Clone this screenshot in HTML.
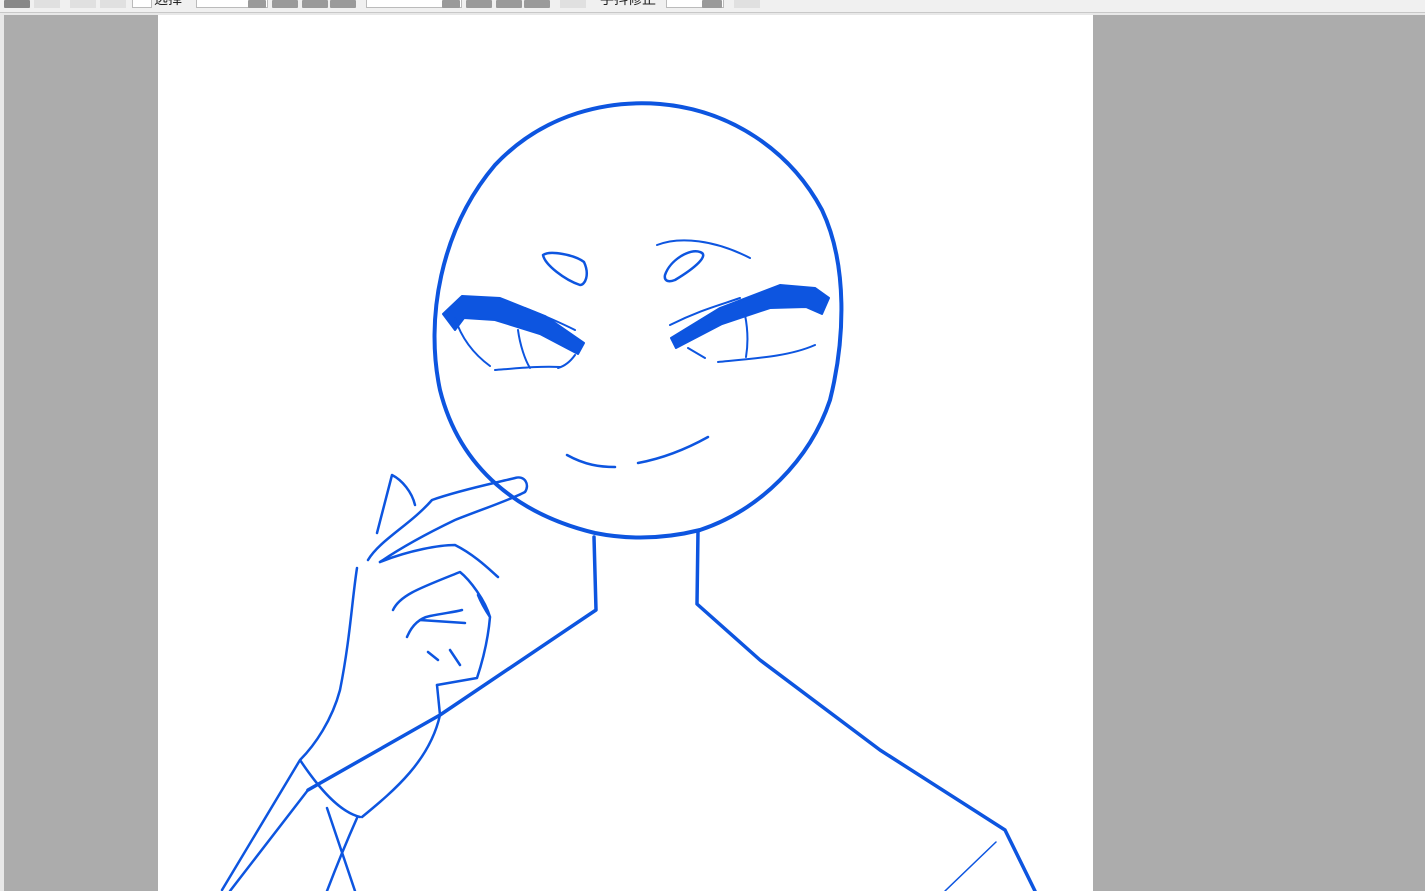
<!DOCTYPE html>
<html><head><meta charset="utf-8"><style>
html,body{margin:0;padding:0;width:1425px;height:891px;overflow:hidden;background:#fff;font-family:"Liberation Sans","Noto Sans CJK SC",sans-serif}
.tb{position:absolute;left:0;top:0;width:1425px;height:12px;background:#f0f0f0;border-bottom:1px solid #c8c8c8}
.b{position:absolute;top:0;height:8px;background:#9a9a9a;border-radius:1px}
.l{position:absolute;top:0;height:8px;background:#e0e0e0}
.in{position:absolute;top:0;height:7px;background:#fff;border:1px solid #bbb;border-top:none}
.area{position:absolute;left:0;top:13px;width:1425px;height:878px;background:#e8e8e8}
.g1{position:absolute;left:4px;top:15px;width:154px;height:876px;background:#acacac}
.g2{position:absolute;left:1093px;top:15px;width:332px;height:876px;background:#acacac}
.w{position:absolute;left:158px;top:15px;width:935px;height:876px;background:#fff}
svg{position:absolute;left:0;top:0}
.t{position:absolute;top:-10px;font-size:14px;color:#222;line-height:18px}
</style></head><body>
<div class="tb">
<div class="b" style="left:4px;width:26px;background:#888"></div>
<div class="l" style="left:34px;width:26px"></div>
<div class="l" style="left:70px;width:26px"></div>
<div class="l" style="left:100px;width:26px"></div>
<div class="in" style="left:132px;width:18px"></div>
<span class="t" style="left:154px">选择</span>
<div class="in" style="left:196px;width:70px"></div><div class="b" style="left:248px;width:18px"></div>
<div class="b" style="left:272px;width:26px"></div><div class="b" style="left:302px;width:26px"></div><div class="b" style="left:330px;width:26px"></div>
<div class="in" style="left:366px;width:94px"></div><div class="b" style="left:442px;width:18px"></div>
<div class="b" style="left:466px;width:26px"></div><div class="b" style="left:496px;width:26px"></div><div class="b" style="left:524px;width:26px"></div>
<div class="l" style="left:560px;width:26px"></div>
<span class="t" style="left:600px">手抖修正</span>
<div class="in" style="left:666px;width:56px"></div><div class="b" style="left:702px;width:20px"></div>
<div class="l" style="left:734px;width:26px"></div>
</div>
<div class="area"></div><div class="g1"></div><div class="g2"></div><div class="w"></div>
<svg width="1425" height="891" viewBox="0 0 1425 891" fill="none" stroke="#0d55e0" stroke-linecap="round" stroke-linejoin="round">
<path stroke-width="4" d="M595,533 C520,515 460,470 440,390 C425,320 440,230 495,165 C545,112 610,100 660,104 C730,110 790,150 822,210 C848,265 845,340 830,400 C810,460 760,510 700,530 C660,540 625,539 595,533 Z"/>
<path stroke-width="3.5" d="M594,537 L596,610 L590,614 L440,715 L308,790"/>
<path stroke-width="3.5" d="M698,531 L697,604 L760,660 L880,750 L1005,830 L1035,891"/>
<path stroke-width="1.5" d="M996,842 L945,891"/>
<path stroke-width="2.5" d="M543,255 C550,250 575,255 584,262 C590,275 585,285 580,285 C565,280 545,265 543,255 Z"/>
<path stroke-width="2.5" d="M665,275 C670,260 690,248 700,252 C710,255 695,268 675,280 C667,283 664,280 665,275 Z"/>
<path stroke-width="2" d="M657,245 C680,236 715,240 750,258"/>
<path fill="#0d55e0" stroke="#0d55e0" stroke-width="2" d="M443,314 L462,296 L500,298 L545,316 L584,343 L578,354 L540,334 L495,320 L464,318 L455,330 Z"/>
<path stroke-width="2" d="M455,318 C462,340 475,355 490,366 M495,370 C520,368 540,366 560,367 M518,330 C520,345 525,360 530,368 M575,355 C570,362 565,366 558,368 M525,308 C545,316 565,325 575,330"/>
<path fill="#0d55e0" stroke="#0d55e0" stroke-width="2" d="M671,338 L720,308 L780,285 L815,288 L829,298 L822,314 L806,307 L770,308 L722,324 L676,348 Z"/>
<path stroke-width="2" d="M688,348 L705,358 M718,362 C760,358 790,356 815,345 M745,315 C748,330 748,345 746,357 M670,325 C700,310 720,305 740,298"/>
<path stroke-width="2.5" d="M567,455 C585,465 600,467 615,467 M638,463 C665,458 690,447 708,437"/>
<path stroke-width="2.5" d="M377,533 C383,510 388,490 392,475 C402,480 412,492 415,505 M368,560 C380,540 410,525 432,500 C460,490 495,483 515,478 C525,475 530,485 525,492 C510,500 480,510 455,520 M455,520 C430,532 405,545 380,562"/>
<path stroke-width="2.5" d="M357,568 C352,600 350,640 340,690 C332,720 315,745 300,760 L222,890 M308,790 L230,891 M300,760 C320,790 340,812 360,817 M362,817 C395,790 430,760 440,715 L437,685 M327,808 L355,891 M357,818 C345,845 335,870 327,891"/>
<path stroke-width="2.5" d="M380,562 C410,550 440,545 455,545 C475,555 490,570 498,577 M393,610 C400,595 420,588 460,572 C470,580 485,600 490,617 C488,640 483,660 477,678 L437,685 M407,637 C412,625 420,618 430,616 C445,613 455,612 462,610 M490,617 C484,608 480,600 478,595 M428,652 L438,660 M450,650 L460,665 M420,620 L465,623"/>
</svg>
</body></html>
